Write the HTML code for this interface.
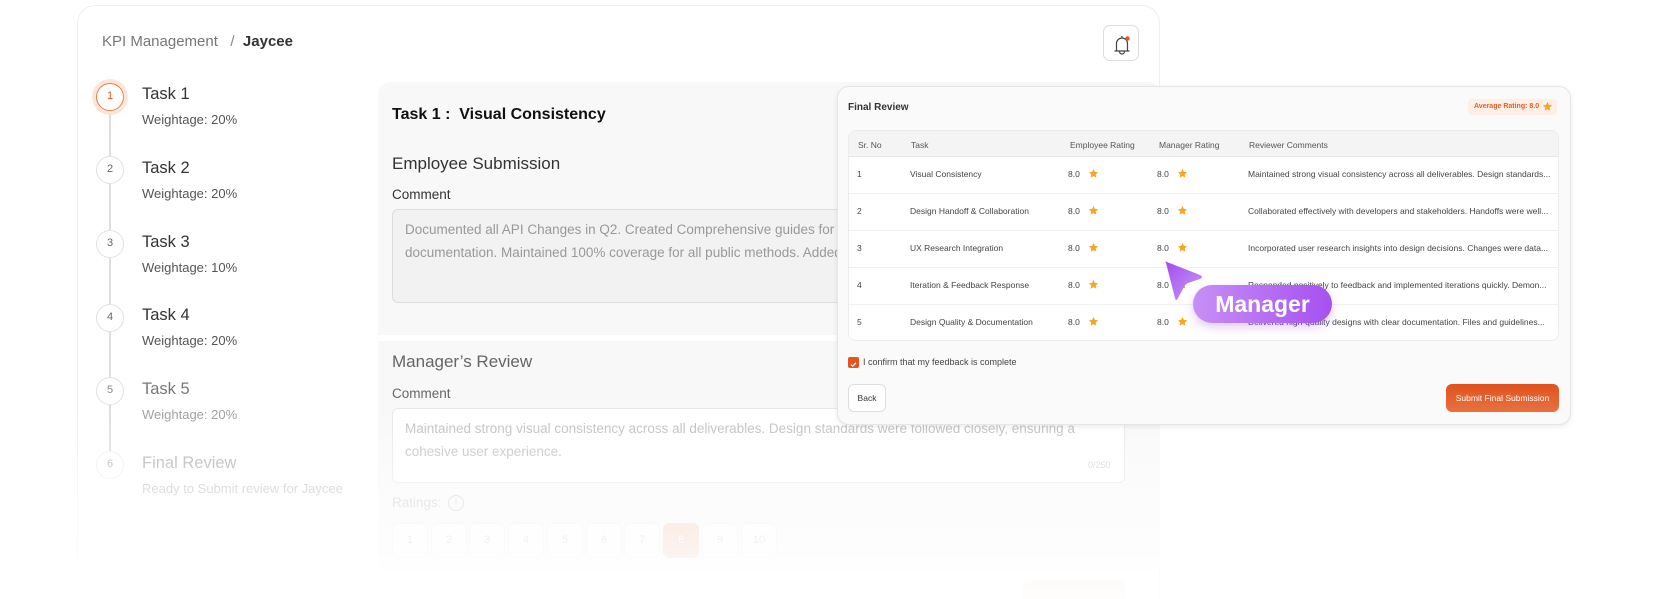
<!DOCTYPE html>
<html><head><meta charset="utf-8"><style>
*{box-sizing:border-box;margin:0;padding:0}
html{width:1654px;height:599px;overflow:hidden}
body{width:1654px;height:599px;overflow:hidden;background:#fff;font-family:"Liberation Sans",sans-serif;position:relative;color:#222}
.abs{position:absolute}
.card{left:77px;top:5px;width:1083px;height:594px;border:1px solid #efefef;border-bottom:0;border-radius:18px 18px 0 0;background:#fff}
.crumb{left:102px;top:33px;font-size:15px;color:#777}
.crumb b{color:#333;font-weight:600}
.circ{width:28px;height:28px;border-radius:50%;border:1.5px solid #e2e2e2;background:#fff;font-size:11px;color:#666;text-align:center;line-height:25px}
.line{left:109px;width:2px;background:#ddd}
.st{left:142px;font-size:16.5px;color:#333}
.sw{left:142px;font-size:13px;color:#555}
.panel{left:378px;top:82px;width:782px;height:490px;background:#f8f8f8;border-radius:12px}
.ta{border-radius:6px;font-size:13.5px;line-height:23px;padding:8px 12px}
.rb{width:36px;height:35px;border:1px solid #eee;border-radius:6px;background:#fcfcfc;color:#ccc;font-size:11px;text-align:center;line-height:33px;top:523px}
.fr{left:837px;top:86px;width:734px;height:339px;background:#fafafa;border:1px solid #e6e6e6;border-radius:12px;box-shadow:0 2px 6px rgba(0,0,0,.08)}
.tbl{left:848px;top:130px;width:711px;height:211px;border:1px solid #ececec;border-radius:8px;background:#fff;overflow:hidden}
.th{position:absolute;top:0;left:0;right:0;height:26px;background:#f4f4f4;border-bottom:1px solid #e8e8e8}
.c{position:absolute;font-size:8.5px;color:#444;white-space:nowrap}
.row{position:absolute;left:0;right:0;height:37px;border-bottom:1px solid #f0f0f0}
.star{position:absolute;width:11px;height:11px}
.fade{left:0;top:400px;width:1654px;height:199px;background:linear-gradient(rgba(255,255,255,0),rgba(255,255,255,.5) 45%,rgba(255,255,255,.8) 80%,rgba(255,255,255,.9))}
</style></head><body>
<div class="abs card"></div>
<div class="abs crumb">KPI Management &nbsp; <span style="color:#888">/</span> &nbsp;<b>Jaycee</b></div>
<div class="abs" style="left:1103px;top:25px;width:36px;height:36px;border:1px solid #ddd;border-radius:7px;background:#fff">
<svg width="36" height="36" viewBox="0 0 36 36"><path d="M10.5 25h15M12.5 25v-7.5a5.5 5.5 0 0 1 11 0V25M18 10v2M15.5 25.5a2.5 2.5 0 0 0 5 0" fill="none" stroke="#444" stroke-width="1.2"/><circle cx="23.5" cy="12.5" r="2.2" fill="#e3541f"/></svg></div>

<div class="abs line" style="top:111px;height:340px"></div>
<div class="abs circ" style="left:96px;top:83px;border-color:#f07d45;color:#e3541f;box-shadow:0 0 0 4px #fde6d8">1</div>
<div class="abs circ" style="left:96px;top:156px">2</div>
<div class="abs circ" style="left:96px;top:230px">3</div>
<div class="abs circ" style="left:96px;top:304px">4</div>
<div class="abs circ" style="left:96px;top:377px;color:#888">5</div>
<div class="abs circ" style="left:96px;top:451px;color:#aaa;border-color:#eee">6</div>
<div class="abs st" style="top:85px">Task 1</div><div class="abs sw" style="top:112px">Weightage: 20%</div>
<div class="abs st" style="top:159px">Task 2</div><div class="abs sw" style="top:186px">Weightage: 20%</div>
<div class="abs st" style="top:233px">Task 3</div><div class="abs sw" style="top:260px">Weightage: 10%</div>
<div class="abs st" style="top:306px">Task 4</div><div class="abs sw" style="top:333px">Weightage: 20%</div>
<div class="abs st" style="top:380px;color:#777">Task 5</div><div class="abs sw" style="top:407px;color:#999">Weightage: 20%</div>
<div class="abs st" style="top:454px;color:#aaa">Final Review</div><div class="abs sw" style="top:481px;color:#bbb">Ready to Submit review for Jaycee</div>

<div class="abs panel"></div>
<div class="abs" style="left:378px;top:335px;width:782px;height:6px;background:#fff"></div>
<div class="abs" style="left:392px;top:106px;font-size:16px;font-weight:700;color:#111">Task 1 :&nbsp; Visual Consistency</div>
<div class="abs" style="left:392px;top:154px;font-size:17px;color:#333">Employee Submission</div>
<div class="abs" style="left:392px;top:187px;font-size:13.5px;color:#333">Comment</div>
<div class="abs ta" style="left:392px;top:209px;width:760px;height:94px;background:#f2f2f2;border:1px solid #ddd;color:#999">Documented all API Changes in Q2. Created Comprehensive guides for new endpoints and updated existing documentation. Maintained 100% coverage for all public methods. Added interactive examples to key sections.</div>
<div class="abs" style="left:392px;top:352px;font-size:17px;color:#666">Manager’s Review</div>
<div class="abs" style="left:392px;top:386px;font-size:13.5px;color:#666">Comment</div>
<div class="abs ta" style="left:392px;top:408px;width:733px;height:75px;background:#fff;border:1px solid #e6e6e6;color:#bbb">Maintained strong visual consistency across all deliverables. Design standards were followed closely, ensuring a cohesive user experience.</div>
<div class="abs" style="left:1088px;top:460px;font-size:9px;color:#ccc">0/250</div>
<div class="abs" style="left:392px;top:495px;font-size:13.5px;color:#ccc">Ratings:</div>
<div class="abs" style="left:448px;top:495px;width:16px;height:16px;border:1.3px solid #ccc;border-radius:50%;font-size:10px;color:#ccc;text-align:center;line-height:14px">i</div>
<div class="abs rb" style="left:392px">1</div><div class="abs rb" style="left:431px">2</div><div class="abs rb" style="left:469px">3</div><div class="abs rb" style="left:508px">4</div><div class="abs rb" style="left:547px">5</div><div class="abs rb" style="left:586px">6</div><div class="abs rb" style="left:624px">7</div>
<div class="abs rb" style="left:663px;background:#f3cbb9;border-color:#f3cbb9;color:#fff">8</div>
<div class="abs rb" style="left:702px">9</div><div class="abs rb" style="left:741px">10</div>
<div class="abs" style="left:1023px;top:580px;width:102px;height:30px;border-radius:6px;background:#fbe9e2"></div>
<div class="abs fade"></div>

<div class="abs fr"></div>
<div class="abs" style="left:848px;top:102px;font-size:10px;font-weight:700;color:#333">Final Review</div>
<div class="abs" style="left:1468px;top:99px;width:89px;height:16px;background:#fdefe6;border-radius:4px;font-size:7px;font-weight:700;color:#e5602a;line-height:16px;padding-left:6px">Average Rating: 8.0
<svg class="star" style="left:74px;top:2px" viewBox="0 0 24 24"><path d="M12 2l3 6.5 7 .8-5.2 4.8 1.4 7L12 17.6 5.8 21.1l1.4-7L2 9.3l7-.8z" fill="#f5a623"/></svg></div>

<div class="abs tbl">
<div class="th"></div>
<div class="c" style="left:9px;top:9px;color:#555">Sr. No</div><div class="c" style="left:62px;top:9px;color:#555">Task</div><div class="c" style="left:221px;top:9px;color:#555">Employee Rating</div><div class="c" style="left:310px;top:9px;color:#555">Manager Rating</div><div class="c" style="left:400px;top:9px;color:#555">Reviewer Comments</div>
<div class="row" style="top:26px"></div><div class="row" style="top:63px"></div><div class="row" style="top:100px"></div><div class="row" style="top:137px"></div><div class="row" style="top:174px;border:0"></div>
</div>
<div id="rows"></div>
<script>
var t=["Visual Consistency","Design Handoff &amp; Collaboration","UX Research Integration","Iteration &amp; Feedback Response","Design Quality &amp; Documentation"];
var cm=["Maintained strong visual consistency across all deliverables. Design standards...","Collaborated effectively with developers and stakeholders. Handoffs were well...","Incorporated user research insights into design decisions. Changes were data...","Responded positively to feedback and implemented iterations quickly. Demon...","Delivered high-quality designs with clear documentation. Files and guidelines..."];
var s='<path d="M12 2l3 6.5 7 .8-5.2 4.8 1.4 7L12 17.6 5.8 21.1l1.4-7L2 9.3l7-.8z" fill="#f5a623"/>';
var h="";for(var i=0;i<5;i++){var y=174+i*37-5;
h+='<div class="abs c" style="left:857px;top:'+y+'px">'+(i+1)+'</div><div class="abs c" style="left:910px;top:'+y+'px">'+t[i]+'</div><div class="abs c" style="left:1068px;top:'+y+'px">8.0</div><svg class="abs star" style="left:1088px;top:'+(y-1)+'px" viewBox="0 0 24 24">'+s+'</svg><div class="abs c" style="left:1157px;top:'+y+'px">8.0</div><svg class="abs star" style="left:1177px;top:'+(y-1)+'px" viewBox="0 0 24 24">'+s+'</svg><div class="abs c" style="left:1248px;top:'+y+'px">'+cm[i]+'</div>';}
document.getElementById("rows").innerHTML=h;
</script>
<div class="abs" style="left:848px;top:357px;width:11px;height:11px;background:#e3541f;border-radius:2px"><svg width="11" height="11" viewBox="0 0 11 11"><path d="M3 5.6l1.7 1.7L8 3.8" fill="none" stroke="#fff" stroke-width="1.2"/></svg></div>
<div class="abs" style="left:863px;top:357px;font-size:9px;color:#444">I confirm that my feedback is complete</div>
<div class="abs" style="left:848px;top:384px;width:38px;height:28px;border:1px solid #ddd;border-radius:6px;background:#fff;font-size:8.5px;color:#333;text-align:center;line-height:26px">Back</div>
<div class="abs" style="left:1446px;top:384px;width:113px;height:28px;border-radius:6px;background:linear-gradient(#e0521f,#e8713f);font-size:8.5px;color:#fff;text-align:center;line-height:28px">Submit Final Submission</div>

<svg class="abs" style="left:1160px;top:258px" width="48" height="46" viewBox="0 0 48 46"><defs><linearGradient id="g" x1="0" y1="0" x2="1" y2="1"><stop offset="0" stop-color="#a24cf0"/><stop offset="1" stop-color="#c99af7"/></linearGradient></defs><path d="M6 5 Q4 3 7 4 L40 17 Q44 19 40 21 L28 25 Q25 26 24 29 L18 40 Q16 44 15 40 Z" fill="url(#g)"/></svg>
<div class="abs" style="left:1193px;top:285px;width:139px;height:38px;border-radius:19px;background:linear-gradient(90deg,#c78ff6,#a651ef);box-shadow:0 4px 10px rgba(160,80,230,.3);color:#fff;font-size:23px;font-weight:700;text-align:center;line-height:38px">Manager</div>
</body></html>
